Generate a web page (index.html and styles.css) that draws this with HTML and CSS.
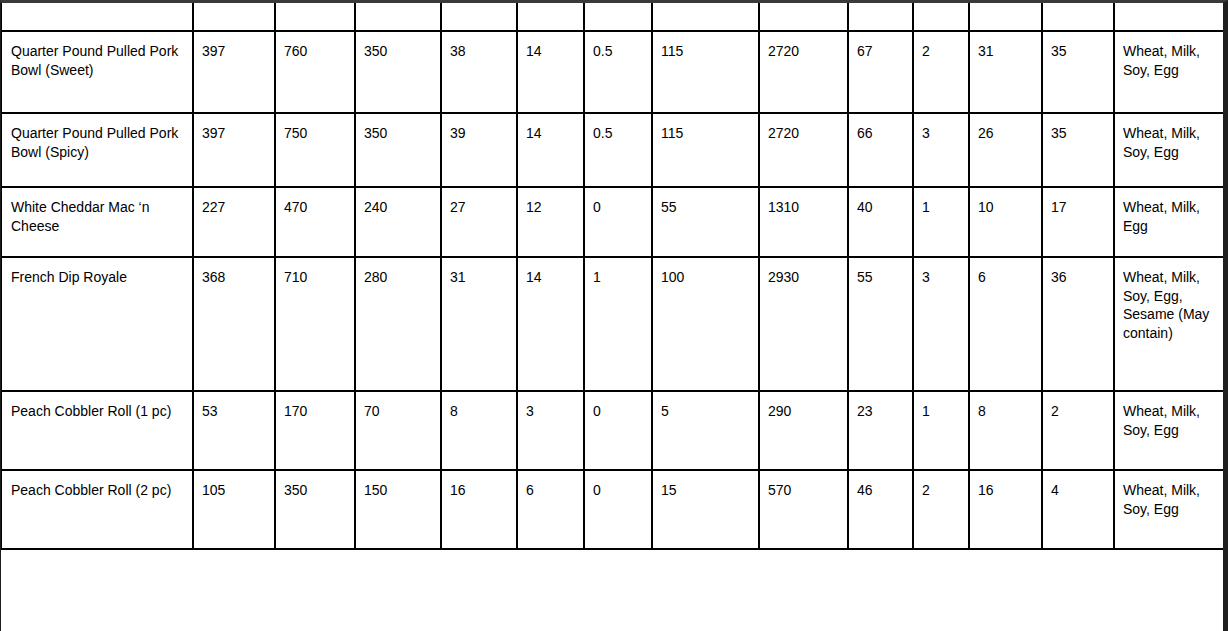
FILE: index.html
```html
<!DOCTYPE html>
<html>
<head>
<meta charset="utf-8">
<link rel="stylesheet" href="styles.css">
</head>
<body>
<div class="page">
<table class="nutrition">
<colgroup>
<col class="c1"><col class="c2"><col class="c3"><col class="c4"><col class="c5"><col class="c6"><col class="c7"><col class="c8"><col class="c9"><col class="c10"><col class="c11"><col class="c12"><col class="c13"><col class="c14">
</colgroup>
<tbody>
<tr class="head"><td></td><td></td><td></td><td></td><td></td><td></td><td></td><td></td><td></td><td></td><td></td><td></td><td></td><td></td></tr>
<tr class="r1"><td>Quarter Pound Pulled Pork Bowl (Sweet)</td><td>397</td><td>760</td><td>350</td><td>38</td><td>14</td><td>0.5</td><td>115</td><td>2720</td><td>67</td><td>2</td><td>31</td><td>35</td><td>Wheat, Milk, Soy, Egg</td></tr>
<tr class="r2"><td>Quarter Pound Pulled Pork Bowl (Spicy)</td><td>397</td><td>750</td><td>350</td><td>39</td><td>14</td><td>0.5</td><td>115</td><td>2720</td><td>66</td><td>3</td><td>26</td><td>35</td><td>Wheat, Milk, Soy, Egg</td></tr>
<tr class="r3"><td>White Cheddar Mac ‘n Cheese</td><td>227</td><td>470</td><td>240</td><td>27</td><td>12</td><td>0</td><td>55</td><td>1310</td><td>40</td><td>1</td><td>10</td><td>17</td><td>Wheat, Milk, Egg</td></tr>
<tr class="r4"><td>French Dip Royale</td><td>368</td><td>710</td><td>280</td><td>31</td><td>14</td><td>1</td><td>100</td><td>2930</td><td>55</td><td>3</td><td>6</td><td>36</td><td>Wheat, Milk, Soy, Egg, Sesame (May contain)</td></tr>
<tr class="r5"><td>Peach Cobbler Roll (1 pc)</td><td>53</td><td>170</td><td>70</td><td>8</td><td>3</td><td>0</td><td>5</td><td>290</td><td>23</td><td>1</td><td>8</td><td>2</td><td>Wheat, Milk, Soy, Egg</td></tr>
<tr class="r6"><td>Peach Cobbler Roll (2 pc)</td><td>105</td><td>350</td><td>150</td><td>16</td><td>6</td><td>0</td><td>15</td><td>570</td><td>46</td><td>2</td><td>16</td><td>4</td><td>Wheat, Milk, Soy, Egg</td></tr>
</tbody>
</table>
</div>
</body>
</html>
```

FILE: styles.css
```css
html, body {
  margin: 0;
  padding: 0;
  background: #1f1f1f;
}
.page {
  width: 1222px;
  height: 628px;
  background: #ffffff;
  border-top: 3px solid #3a3a3a;
  border-left: 1px solid #1c1c1c;
  border-right: 5px solid #1f1f1f;
  overflow: hidden;
  font-family: "Liberation Sans", Arial, sans-serif;
  font-size: 14px;
  color: #000;
}
.nutrition {
  table-layout: fixed;
  width: 1222px;
  border-collapse: separate;
  border-spacing: 0;
}
.nutrition td {
  border-right: 2px solid #000;
  border-bottom: 2px solid #000;
  padding: 10px 8px 0 8px;
  vertical-align: top;
  line-height: 18.7px;
  overflow: hidden;
}
.nutrition td:first-child {
  border-left: 1px solid #000;
  padding-left: 9px;
}
.nutrition td:last-child {
  border-right: none;
}
.c1 { width: 193px; }
.c2 { width: 82px; }
.c3 { width: 80px; }
.c4 { width: 86px; }
.c5 { width: 76px; }
.c6 { width: 67px; }
.c7 { width: 68px; }
.c8 { width: 107px; }
.c9 { width: 89px; }
.c10 { width: 65px; }
.c11 { width: 56px; }
.c12 { width: 73px; }
.c13 { width: 72px; }
.c14 { width: 108px; }
.head { height: 29px; }
.head td { padding: 0; }
.r1 { height: 82px; }
.r2 { height: 74px; }
.r3 { height: 70px; }
.r4 { height: 134px; }
.r5 { height: 79px; }
.r6 { height: 79px; }
```
